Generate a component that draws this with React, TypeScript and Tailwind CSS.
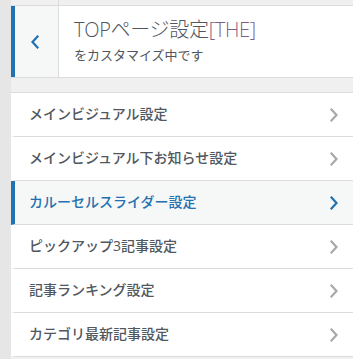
import React from "react";

const font = { fontFamily: '"Open Sans", "Noto Sans CJK JP", sans-serif' };

const sections = [
  { id: "mv", title: "メインビジュアル設定" },
  { id: "mv-news", title: "メインビジュアル下お知らせ設定" },
  { id: "carousel", title: "カルーセルスライダー設定", active: true },
  { id: "pickup", title: "ピックアップ3記事設定" },
  { id: "ranking", title: "記事ランキング設定" },
  { id: "category", title: "カテゴリ最新記事設定" },
];

function Chevron({ dir, className }: { dir: "left" | "right"; className: string }) {
  const d = dir === "right" ? "M1.5 1.5 L6.5 7 L1.5 12.5" : "M6.5 1.5 L1.5 7 L6.5 12.5";
  return (
    <svg width="8" height="14" viewBox="0 0 8 14" className={className} fill="none">
      <path d={d} stroke="currentColor" strokeWidth="2.2" strokeLinecap="square" />
    </svg>
  );
}

function SectionRow({ title, active }: { title: string; active?: boolean }) {
  return (
    <li
      className={
        "flex items-center justify-between h-[44px] border-b border-b-[#dcdcde] border-l-4 pl-[14px] pr-[15px] " +
        (active
          ? "border-l-[#2271b1] bg-[#f6f7f7] text-[#2271b1]"
          : "border-l-white bg-white text-[#50575e]")
      }
    >
      <span className="text-[14px] leading-[20px] font-medium -mt-[2px]">{title}</span>
      <Chevron dir="right" className={active ? "text-[#2271b1]" : "text-[#a7aaad]"} />
    </li>
  );
}

export default function App() {
  return (
    <div className="flex w-[353px] h-[359px] overflow-hidden bg-[#f0f0f1]" style={font}>
      <div className="w-[11px] shrink-0 bg-[#e6e6e6]" />

      <div className="flex-1 flex flex-col">
        {/* top of the scrolled header */}
        <div className="h-[5px] flex">
          <div className="w-[48px] border-r border-[#dcdcde]" />
        </div>

        {/* panel header */}
        <div className="flex h-[73px] bg-white border-y border-[#dcdcde]">
          <button className="w-[48px] shrink-0 flex items-center justify-center border-l-4 border-l-[#2271b1] border-r border-r-[#dcdcde] bg-[#f6f7f7] text-[#2271b1]">
            <Chevron dir="left" className="-ml-[3px]" />
          </button>
          <div className="pl-[15px] pt-[11px] text-[#50575e]">
            <div className="text-[20px] leading-[26px] font-extralight tracking-[-0.3px]">
              TOPページ設定<span className="text-[#7e5f86]">[THE]</span>
            </div>
            <div className="text-[13px] leading-[20px] mt-[2px]">をカスタマイズ中です</div>
          </div>
        </div>

        <div className="h-[14px]" />

        {/* section list */}
        <ul className="border-t border-[#dcdcde]">
          {sections.map((s) => (
            <SectionRow key={s.id} title={s.title} active={s.active} />
          ))}
        </ul>
      </div>
    </div>
  );
}
